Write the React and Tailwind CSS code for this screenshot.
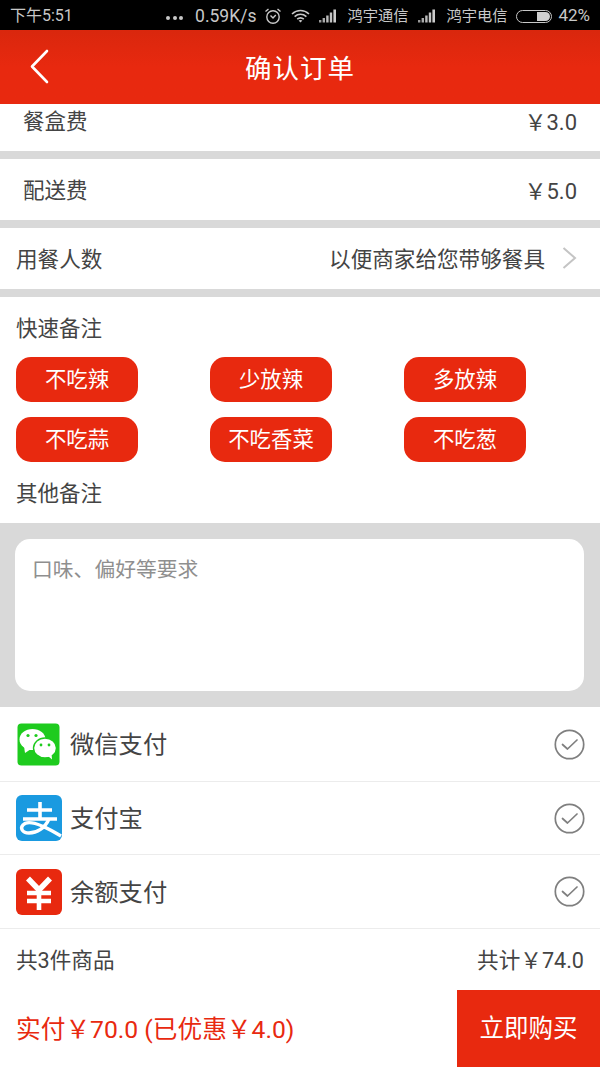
const F = "font-['Roboto','Noto_Sans_CJK_SC',sans-serif]";

function Signal() {
  return (
    <svg width="20" height="14" viewBox="0 0 20 14" className="shrink-0">
      <rect x="0" y="11" width="2.4" height="2.5" fill="#999" />
      <rect x="3.6" y="9" width="2.4" height="4.5" fill="#aaa" />
      <rect x="7.2" y="6.5" width="2.4" height="7" fill="#bbb" />
      <rect x="10.8" y="3.5" width="2.4" height="10" fill="#c4c4c4" />
      <rect x="14.4" y="0.5" width="2.6" height="13" fill="#ccc" />
    </svg>
  );
}

function StatusBar() {
  return (
    <div className="h-[30px] bg-black text-[#c8c8c8] flex items-center pl-[10px] pr-[10px] pt-[2px]">
      <span className="text-[16px]">下午5:51</span>
      <div className="ml-auto flex items-center">
        <span className="flex gap-[2.5px] mr-[12px] mt-[4px]">
          <i className="w-[4px] h-[4px] rounded-full bg-[#c8c8c8]" />
          <i className="w-[4px] h-[4px] rounded-full bg-[#c8c8c8]" />
          <i className="w-[4px] h-[4px] rounded-full bg-[#c8c8c8]" />
        </span>
        <span className="text-[17.5px] mr-[8px]">0.59K/s</span>
        <svg width="18" height="18" viewBox="0 0 18 18" fill="none" stroke="#c8c8c8" strokeWidth="1.4" className="mr-[9px] mb-[1px]">
          <circle cx="9" cy="10" r="6.2" />
          <path d="M6.5 8.5 9 11l2.8-3M1.5 4.5 4.5 2M16.5 4.5 13.5 2" />
        </svg>
        <svg width="19" height="14" viewBox="0 0 19 14" fill="none" stroke="#c8c8c8" strokeWidth="1.6" className="mr-[9px]">
          <path d="M1 5c5-4.6 12-4.6 17 0M3.6 7.6c3.5-3 8.3-3 11.8 0M6.2 10.2c2-1.6 4.6-1.6 6.6 0" />
          <path d="M9.5 13.5 7.6 11.6c1.1-.8 2.7-.8 3.8 0z" fill="#c8c8c8" stroke="none" />
        </svg>
        <Signal />
        <span className="ml-[8px] text-[15.25px]">鸿宇通信</span>
        <span className="ml-[10px]"><Signal /></span>
        <span className="ml-[8px] text-[15.25px]">鸿宇电信</span>
        <span className="ml-[9px] w-[36px] h-[13px] rounded-full border border-[#c8c8c8] flex justify-end p-[1px]">
          <i className="w-[13px] h-full rounded-r-full bg-[#d0d0d0]" />
        </span>
        <span className="ml-[6px] text-[17px]">42%</span>
      </div>
    </div>
  );
}

function Header() {
  return (
    <div className="h-[74px] bg-gradient-to-b from-[#d9270d] via-[#e8290f] to-[#e8290f] flex items-center justify-center relative">
      <svg width="22" height="36" viewBox="0 0 22 36" fill="none" stroke="#fff" strokeWidth="2.6" strokeLinecap="round" strokeLinejoin="round" className="absolute left-[29px] top-[19px]">
        <path d="M18 2 3 17.5 18 33" />
      </svg>
      <span className="text-white text-[26.5px] tracking-[1px] font-normal mt-[3px]">确认订单</span>
    </div>
  );
}

function FeeRow({ label, value, h, top }) {
  return (
    <div className={`bg-white flex justify-between px-[23px] text-[#444] text-[21.5px] ${h}`}>
      <span className={top}>{label}</span>
      <span className={`${top} text-[22px]`}>{value}</span>
    </div>
  );
}

const Sep = () => <div className="h-[8px] bg-[#d9d9d9]" />;

function Tag({ children }) {
  return (
    <div className="w-[122px] h-[45px] rounded-[15px] bg-[#e8290f] text-white text-[21.4px] flex items-center justify-center pt-[2px]">
      {children}
    </div>
  );
}

function Check() {
  return (
    <svg width="31" height="31" viewBox="0 0 31 31" fill="none" stroke="#7f7f7f" strokeWidth="1.7" className="shrink-0">
      <circle cx="15.5" cy="15.5" r="14.2" />
      <path d="M8.5 15.5 13.5 20 23 11" strokeLinecap="round" strokeLinejoin="round" />
    </svg>
  );
}

function WeChatIcon() {
  return (
    <svg width="43" height="43" viewBox="0 0 43 43">
      <rect x="0.5" y="0.5" width="42" height="42" rx="4" fill="#1ecb1e" />
      <ellipse cx="15.5" cy="16.5" rx="13" ry="10.5" fill="#fff" />
      <path d="M7 23l1 7 6-4z" fill="#fff" />
      <ellipse cx="28" cy="25" rx="11.5" ry="10" fill="#fff" stroke="#1ecb1e" strokeWidth="1.4" />
      <path d="M31 33l4 3.5-.5-6z" fill="#fff" />
      <circle cx="11" cy="12.5" r="1.6" fill="#1ecb1e" />
      <circle cx="19" cy="12.5" r="1.6" fill="#1ecb1e" />
      <circle cx="24" cy="22" r="1.4" fill="#1ecb1e" />
      <circle cx="32" cy="22" r="1.4" fill="#1ecb1e" />
    </svg>
  );
}

function AlipayIcon() {
  return (
    <svg width="46" height="46" viewBox="0 0 46 46">
      <rect x="0" y="0" width="46" height="46" rx="6" fill="#1a9ae0" />
      <path d="M11 15H36M24 7V24M7 24H41" stroke="#fff" strokeWidth="3.6" fill="none" />
      <path d="M33 24C29 33 21 38 13 38C6 38 4 33 7 30C11 25 22 27 45 41" stroke="#fff" strokeWidth="3.4" fill="none" />
    </svg>
  );
}

function BalanceIcon() {
  return (
    <svg width="46" height="46" viewBox="0 0 46 46">
      <rect x="0" y="0" width="46" height="46" rx="6" fill="#e8290f" />
      <path d="M12 9.5 23 21 34 9.5" stroke="#fff" strokeWidth="5.5" fill="none" />
      <path d="M11 24H35M11 32H35M23 20V41" stroke="#fff" strokeWidth="4.6" fill="none" />
    </svg>
  );
}

function PayRow({ icon, label, h, iconClass }) {
  return (
    <div className={`bg-white border-b border-[#ececec] flex items-center pr-[15px] ${h}`}>
      <div className={`w-[70px] flex ${iconClass}`}>{icon}</div>
      <span className="text-[24.3px] text-[#444] flex-1 pt-[3px]">{label}</span>
      <Check />
    </div>
  );
}

export default function App() {
  return (
    <div className={`w-[600px] h-[1067px] overflow-hidden bg-white flex flex-col ${F}`}>
      <StatusBar />
      <Header />
      <FeeRow label="餐盒费" value="￥3.0" h="h-[47px]" top="pt-[2px]" />
      <Sep />
      <FeeRow label="配送费" value="￥5.0" h="h-[61px]" top="pt-[16px]" />
      <Sep />
      <div className="h-[61px] bg-white flex items-center pl-[16px] pr-[23px] text-[#444] text-[21.6px]">
        <span className="pt-[3px]">用餐人数</span>
        <span className="ml-auto pt-[3px]">以便商家给您带够餐具</span>
        <svg width="15" height="22" viewBox="0 0 15 22" fill="none" stroke="#c4c4c4" strokeWidth="2" className="ml-[17px] -mt-[1px]">
          <path d="M1.5 1 13 11 1.5 21" />
        </svg>
      </div>
      <Sep />
      <div className="h-[226px] bg-white px-[16px] text-[#444] text-[21.5px]">
        <div className="pt-[16px] leading-[32px]">快速备注</div>
        <div className="grid grid-cols-[122px_122px_122px] justify-between w-[510px] gap-y-[15px] mt-[12px]">
          <Tag>不吃辣</Tag>
          <Tag>少放辣</Tag>
          <Tag>多放辣</Tag>
          <Tag>不吃蒜</Tag>
          <Tag>不吃香菜</Tag>
          <Tag>不吃葱</Tag>
        </div>
        <div className="mt-[16px] leading-[32px]">其他备注</div>
      </div>
      <div className="h-[184px] bg-[#d9d9d9] pt-[16px] pl-[15px] pr-[16px]">
        <div className="h-[152px] bg-white rounded-[15px] pl-[17px] pt-[15px] text-[20.8px] text-[#8f8f8f] leading-[32px]">
          口味、偏好等要求
        </div>
      </div>
      <PayRow icon={<WeChatIcon />} label="微信支付" h="h-[75px]" iconClass="pl-[17px]" />
      <PayRow icon={<AlipayIcon />} label="支付宝" h="h-[73px]" iconClass="pl-[16px]" />
      <PayRow icon={<BalanceIcon />} label="余额支付" h="h-[74px]" iconClass="pl-[16px]" />
      <div className="h-[61px] bg-white flex justify-between items-center px-[16px] text-[#444] text-[21.6px]">
        <span className="pt-[4px]">共3件商品</span>
        <span className="pt-[4px]">共计￥74.0</span>
      </div>
      <div className="h-[77px] bg-white flex items-stretch">
        <div className="flex-1 pl-[16px] flex items-center text-[#e8290f] text-[24.7px] pt-[3px]">实付￥70.0 (已优惠￥4.0)</div>
        <div className="w-[143px] bg-[#e8290f] text-white text-[24.5px] flex items-center justify-center pt-[1px]">立即购买</div>
      </div>
    </div>
  );
}
